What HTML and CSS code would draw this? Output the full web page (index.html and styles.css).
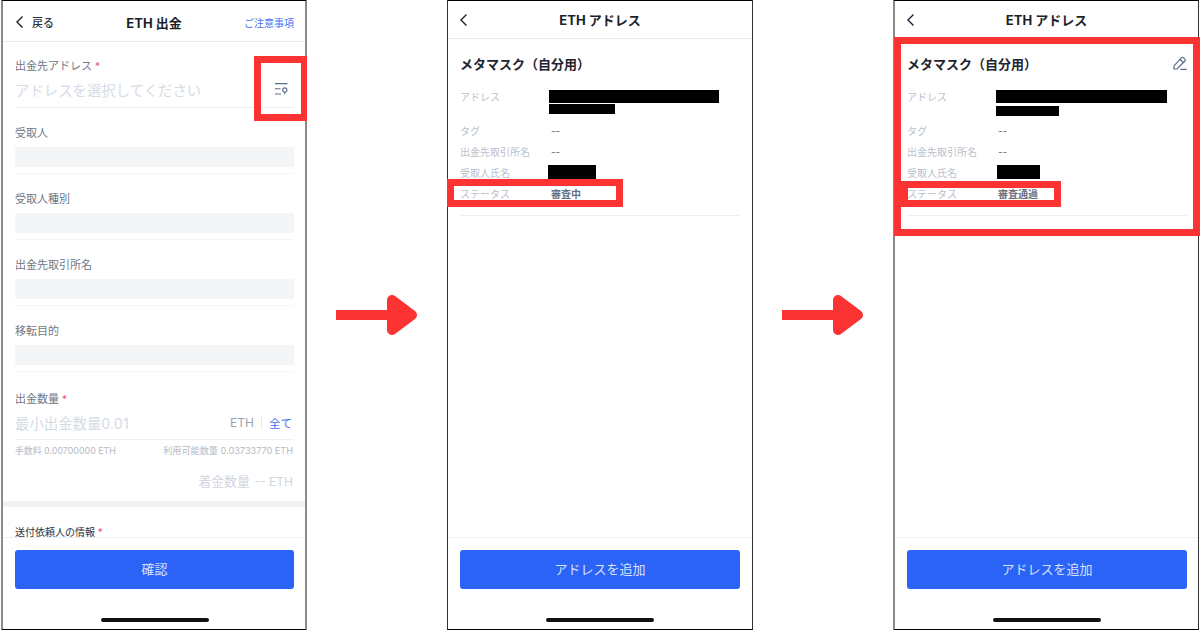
FILE: index.html
```html
<!DOCTYPE html>
<html lang="ja">
<head>
<meta charset="UTF-8">
<title>ETH 出金</title>
<link rel="stylesheet" href="styles.css">
</head>
<body>
<div class="stage">

<div class="phone phoneGray">
  <div class="head headTall">
    <div class="headLeft">
      <svg class="chev" viewBox="0 0 9 14"><path d="M7.500 1.500 2 7l5.500 5.500"/></svg>
      <span class="back">戻る</span>
    </div>
    <div class="title">ETH 出金</div>
    <div class="notice">ご注意事項</div>
  </div>
  <div class="scroll">
    <div class="addrField">
      <div class="label">出金先アドレス <span class="req">*</span></div>
      <div class="inputRow">
        <span class="holder">アドレスを選択してください</span>
        <svg class="bookIcon" viewBox="0 0 14 12"><path d="M1 .6h12.500M1 5.800h5.500M1 11h6"/><circle cx="10.800" cy="7" r="2.100"/><path d="M10.800 9.100v2.200"/></svg>
      </div>
    </div>
    <div class="field"><div class="label">受取人</div><div class="box"></div></div>
    <div class="field"><div class="label">受取人種別</div><div class="box"></div></div>
    <div class="field"><div class="label">出金先取引所名</div><div class="box"></div></div>
    <div class="field"><div class="label">移転目的</div><div class="box"></div></div>
    <div class="amount">
      <div class="label">出金数量 <span class="req">*</span></div>
      <div class="inputRow amountRow">
        <span class="holder">最小出金数量0.01</span>
        <span class="unit">ETH</span><span class="all">全て</span>
      </div>
      <div class="feeRow"><span>手数料 0.00700000 ETH</span><span class="feeAvail">利用可能数量 0.03733770 ETH</span></div>
      <div class="arrive"><span>着金数量</span><span class="arriveNum">-- ETH</span></div>
    </div>
    <div class="band"></div>
    <div class="sender">送付依頼人の情報 <span class="req">*</span></div>
  </div>
  <div class="foot">
    <div class="btn">確認</div>
    <div class="homeBar"></div>
  </div>
  <div class="redBox markAddr"></div>
</div>

<svg class="arrow" viewBox="0 0 82 42"><path class="arrowHead" d="M56 6 76 21 56 36z"/><path d="M0 16h56v10H0z"/></svg>

<div class="phone phoneDark">
  <div class="head">
    <svg class="chev" viewBox="0 0 9 14"><path d="M7.500 1.500 2 7l5.500 5.500"/></svg>
    <div class="title">ETH アドレス</div>
  </div>
  <div class="scroll">
    <div class="card">
      <div class="cardTitle">メタマスク（自分用）</div>
      <div class="row rowAddr"><div class="key">アドレス</div><div class="val"><div class="ink inkLong"></div><div class="ink inkShort"></div></div></div>
      <div class="row"><div class="key">タグ</div><div class="val">--</div></div>
      <div class="row"><div class="key">出金先取引所名</div><div class="val">--</div></div>
      <div class="row"><div class="key">受取人氏名</div><div class="val"><div class="ink inkName"></div></div></div>
      <div class="row"><div class="key">ステータス</div><div class="val status">審査中</div></div>
    </div>
  </div>
  <div class="foot">
    <div class="btn">アドレスを追加</div>
    <div class="homeBar"></div>
  </div>
  <div class="redBox markPending"></div>
</div>

<svg class="arrow" viewBox="0 0 82 42"><path class="arrowHead" d="M56 6 76 21 56 36z"/><path d="M0 16h56v10H0z"/></svg>

<div class="phone phoneMixed">
  <div class="head">
    <svg class="chev" viewBox="0 0 9 14"><path d="M7.500 1.500 2 7l5.500 5.500"/></svg>
    <div class="title">ETH アドレス</div>
  </div>
  <div class="scroll">
    <div class="card">
      <div class="cardTitle">メタマスク（自分用）
        <svg class="pen" viewBox="0 0 14 14"><path d="M1 9.800 8.600 1.700a1.300 1.300 0 0 1 1.900 0l1.400 1.400a1.300 1.300 0 0 1 0 1.900L4 13H1zM7 3.500l3.400 3.200M7.500 13.300h6.300"/></svg>
      </div>
      <div class="row rowAddr"><div class="key">アドレス</div><div class="val"><div class="ink inkLong"></div><div class="ink inkShort inkLow"></div></div></div>
      <div class="row"><div class="key">タグ</div><div class="val">--</div></div>
      <div class="row"><div class="key">出金先取引所名</div><div class="val">--</div></div>
      <div class="row"><div class="key">受取人氏名</div><div class="val"><div class="ink inkNameSm"></div></div></div>
      <div class="row"><div class="key">ステータス</div><div class="val status">審査通過</div></div>
    </div>
  </div>
  <div class="foot">
    <div class="btn">アドレスを追加</div>
    <div class="homeBar"></div>
  </div>
  <div class="redBox markCard"></div>
  <div class="redBox markPassed"></div>
</div>

</div>
</body>
</html>
```
FILE: styles.css
```css
*{
box-sizing: border-box;
}

html, body{
margin: 0;
width: 1200px;
height: 630px;
overflow: hidden;
background: #fff;
font-family: Inter, "Noto Sans CJK JP", sans-serif;
}

.stage{
display: flex;
align-items: center;
gap: 29px;
padding-left: 1px;
height: 630px;
}

/* phones */
.phone{
position: relative;
display: flex;
flex-direction: column;
flex: none;
width: 306px;
height: 630px;
background: #fff;
border-top: 1px solid #000;
border-bottom: 1px solid #000;
}

.phoneGray{
border-left: 2px solid #8a8a8a;
border-right: 2px solid #8a8a8a;
}

.phoneDark{
border-left: 1px solid #333;
border-right: 1px solid #333;
}

.phoneMixed{
border-left: 2px solid #8a8a8a;
border-right: 1px solid #333;
}

.arrow{
flex: none;
width: 82px;
height: 42px;
}

.arrow path{
fill: #fb3333;
}

.arrow .arrowHead{
stroke: #fb3333;
stroke-width: 10;
stroke-linejoin: round;
}

/* header */
.head{
position: relative;
display: flex;
align-items: center;
justify-content: center;
flex: none;
height: 38px;
border-bottom: 1px solid #e8eaed;
}

.headTall{
height: 41px;
justify-content: space-between;
padding: 2px 11px 0 12px;
}

.head > .chev{
position: absolute;
left: 11px;
top: 12px;
}

.headLeft{
display: flex;
align-items: center;
gap: 8px;
width: 49px;
}

.chev{
width: 9px;
height: 14px;
fill: none;
stroke: #1c2330;
stroke-width: 1.400;
}

.back{
font-size: 11px;
font-weight: 500;
color: #2a303c;
}

.title{
font-size: 13px;
font-weight: 700;
color: #1a1f29;
}

.notice{
font-size: 10px;
color: #3f72f2;
}

/* withdraw form */
.scroll{
flex: 1;
min-height: 0;
overflow: hidden;
}

.label{
font-size: 11px;
line-height: 16px;
color: #6f7785;
}

.req{
color: #ef4f70;
font-size: 10px;
}

.addrField{
height: 66px;
margin: 0 11px 0 12px;
padding-top: 16px;
border-bottom: 1px solid #eef0f3;
}

.inputRow{
display: flex;
align-items: center;
justify-content: space-between;
height: 30px;
}

.holder{
font-size: 14.400px;
color: #d5dbe6;
}

.bookIcon{
width: 14px;
height: 12px;
margin-right: 6px;
fill: none;
stroke: #5d6b8c;
stroke-width: 1.100;
}

.field{
height: 66px;
margin: 0 11px 0 12px;
padding-top: 17px;
border-bottom: 1px solid #f5f6f8;
}

.box{
height: 20px;
margin-top: 6px;
background: #f3f5f7;
}

.amount{
margin: 0 11px 0 12px;
padding-top: 19px;
}

.amountRow{
justify-content: flex-start;
margin-top: -1px;
height: 34px;
border-bottom: 1px solid #eef0f3;
}

.amountRow .holder{
flex: 1;
}

.unit{
font-size: 12px;
color: #9aa2b1;
padding-right: 7px;
border-right: 1px solid #e8eaed;
}

.all{
font-size: 11.500px;
color: #3f72f2;
padding-left: 7px;
padding-right: 2px;
}

.feeRow{
display: flex;
justify-content: space-between;
font-size: 8.900px;
line-height: 12px;
margin-top: 5px;
color: #b4bac6;
}

.feeAvail{
font-size: 9.150px;
padding-right: 1px;
}

.arrive{
display: flex;
justify-content: flex-end;
gap: 5px;
font-size: 12.800px;
line-height: 18px;
margin-top: 16px;
color: #d0d5de;
}

.arriveNum{
font-size: 12px;
padding-right: 1px;
}

.band{
height: 6px;
margin-top: 10px;
background: #f0f3f6;
}

.sender{
margin: 19px 12px 0;
font-size: 10px;
line-height: 12px;
color: #2a303c;
}

/* footer */
.foot{
flex: none;
height: 92px;
border-top: 1px solid #eef0f3;
padding: 12px 12px 0;
}

.phoneGray .foot, .phoneMixed .foot{
padding: 12px 11px 0 12px;
}

.btn{
height: 39px;
line-height: 39px;
border-radius: 3px;
text-align: center;
font-size: 13px;
color: #d8e2fd;
background: #2b63f6;
}

.homeBar{
width: 108px;
height: 4px;
margin: 29px auto 0;
border-radius: 2px;
background: #111;
}

/* address card */
.card{
margin: 0 12px;
height: 177px;
padding-top: 14px;
border-bottom: 1px solid #eef0f3;
}

.phoneMixed .card{
margin: 0 11px 0 12px;
}

.cardTitle{
display: flex;
justify-content: space-between;
align-items: center;
height: 20px;
margin-bottom: 15px;
font-size: 13px;
font-weight: 700;
color: #1f2530;
}

.pen{
width: 14px;
height: 14px;
fill: none;
stroke: #5d6b8c;
stroke-width: 1.200;
}

.row{
display: flex;
align-items: center;
height: 21px;
font-size: 10px;
}

.rowAddr{
height: 32px;
align-items: flex-start;
}

.key{
width: 91px;
flex: none;
color: #bac0cc;
}

.rowAddr .key{
margin-top: 1px;
}

.val{
color: #69717f;
}

.status{
font-weight: 700;
}

.ink{
margin-left: -2px;
background: #000;
}

.inkLong{
width: 170px;
height: 13px;
margin-top: 2px;
}

.phoneMixed .inkLong{
width: 171px;
}

.inkShort{
width: 66px;
height: 10px;
margin-top: 1px;
}

.inkLow{
width: 63px;
margin-top: 3px;
}

.inkName{
width: 48px;
height: 14px;
margin-left: -3px;
margin-bottom: 2px;
}

.inkNameSm{
width: 43px;
height: 14px;
margin-left: -1px;
margin-bottom: 2px;
}

/* red markers over the screenshots */
.redBox{
position: absolute;
border: 7px solid #fb3333;
}

.markAddr{
left: 251px;
top: 55px;
width: 53px;
height: 65px;
border-right-width: 6px;
}

.markPending{
left: -1px;
top: 178px;
width: 176px;
height: 28px;
}

.markCard{
left: -1px;
top: 36px;
width: 306px;
height: 199px;
}

.markPassed{
left: 6px;
top: 180px;
width: 160px;
height: 26px;
}
```
